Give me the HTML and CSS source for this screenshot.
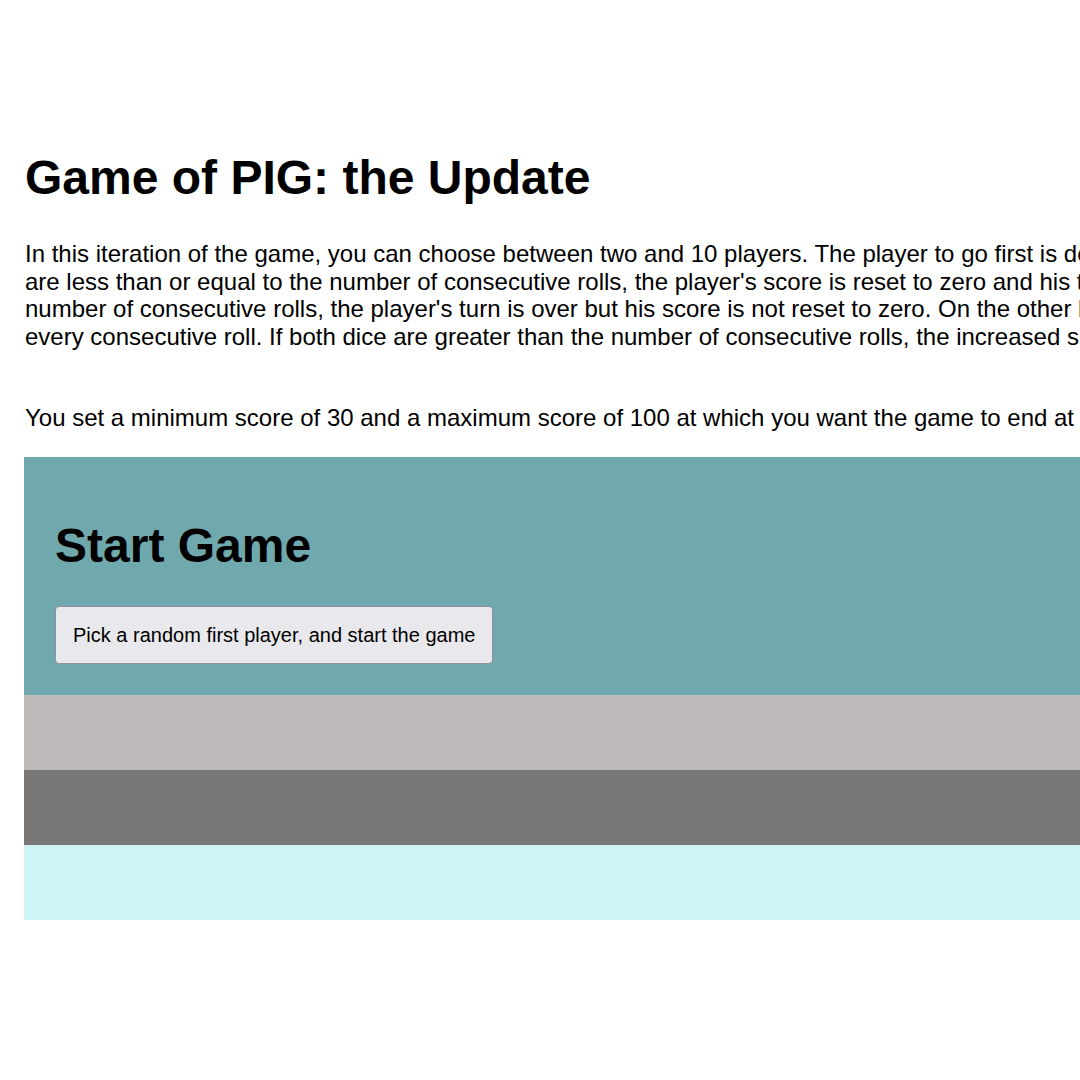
FILE: index.html
```html
<!DOCTYPE html>
<html lang="en">
<head>
<meta charset="utf-8">
<title>Game of PIG: the Update</title>
<link rel="stylesheet" href="styles.css">
</head>
<body>
<div class="page">
  <h1 class="title">Game of PIG: the Update</h1>
  <p class="intro">In this iteration of the game, you can choose between two and 10 players. The player to go first is determined randomly. Each turn, the player rolls two dice. If both dice<br>are less than or equal to the number of consecutive rolls, the player's score is reset to zero and his turn is over. If only one die is less than or equal to the<br>number of consecutive rolls, the player's turn is over but his score is not reset to zero. On the other hand, the points added increase by one for<br>every consecutive roll. If both dice are greater than the number of consecutive rolls, the increased sum is added to the score and he may roll again.</p>
  <p class="intro limits">You set a minimum score of 30 and a maximum score of 100 at which you want the game to end at</p>
  <section class="start">
    <h1 class="start-title">Start Game</h1>
    <button class="start-btn" type="button">Pick a random first player, and start the game</button>
  </section>
  <div class="band band-light"></div>
  <div class="band band-dark"></div>
  <div class="band band-cyan"></div>
</div>
</body>
</html>
```
FILE: styles.css
```css
html, body {
  margin: 0;
  padding: 0;
  background: #ffffff;
}
body {
  font-family: "Liberation Sans", Arial, sans-serif;
  font-size: 24px;
  color: #000;
}
.page {
  width: 1500px;
  padding: 118px 0 0 24px;
}
.title {
  font-size: 48px;
  line-height: 55px;
  font-weight: bold;
  margin: 32px 0 35px 1px;
}
.intro {
  font-size: 24px;
  line-height: 27.6px;
  margin: 0 0 54px 1px;
  white-space: nowrap;
}
.limits {
  margin-bottom: 25px;
}
.start {
  background: #6fa9ae;
  padding: 29px 31px 31px;
  display: flex;
  flex-direction: column;
  align-items: flex-start;
}
.start-title {
  font-size: 48px;
  line-height: 55px;
  font-weight: bold;
  margin: 32px 0 33px;
}
.start-btn {
  font-family: "Liberation Sans", Arial, sans-serif;
  font-size: 20px;
  line-height: 24px;
  color: #000;
  background: #e9e9ed;
  border: 1px solid #8f8f9d;
  border-radius: 4px;
  padding: 16px 17px;
  white-space: nowrap;
}
.band {
  height: 75px;
}
.band-light { background: #bfbaba; }
.band-dark { background: #787776; }
.band-cyan { background: #cff4f6; }
```
